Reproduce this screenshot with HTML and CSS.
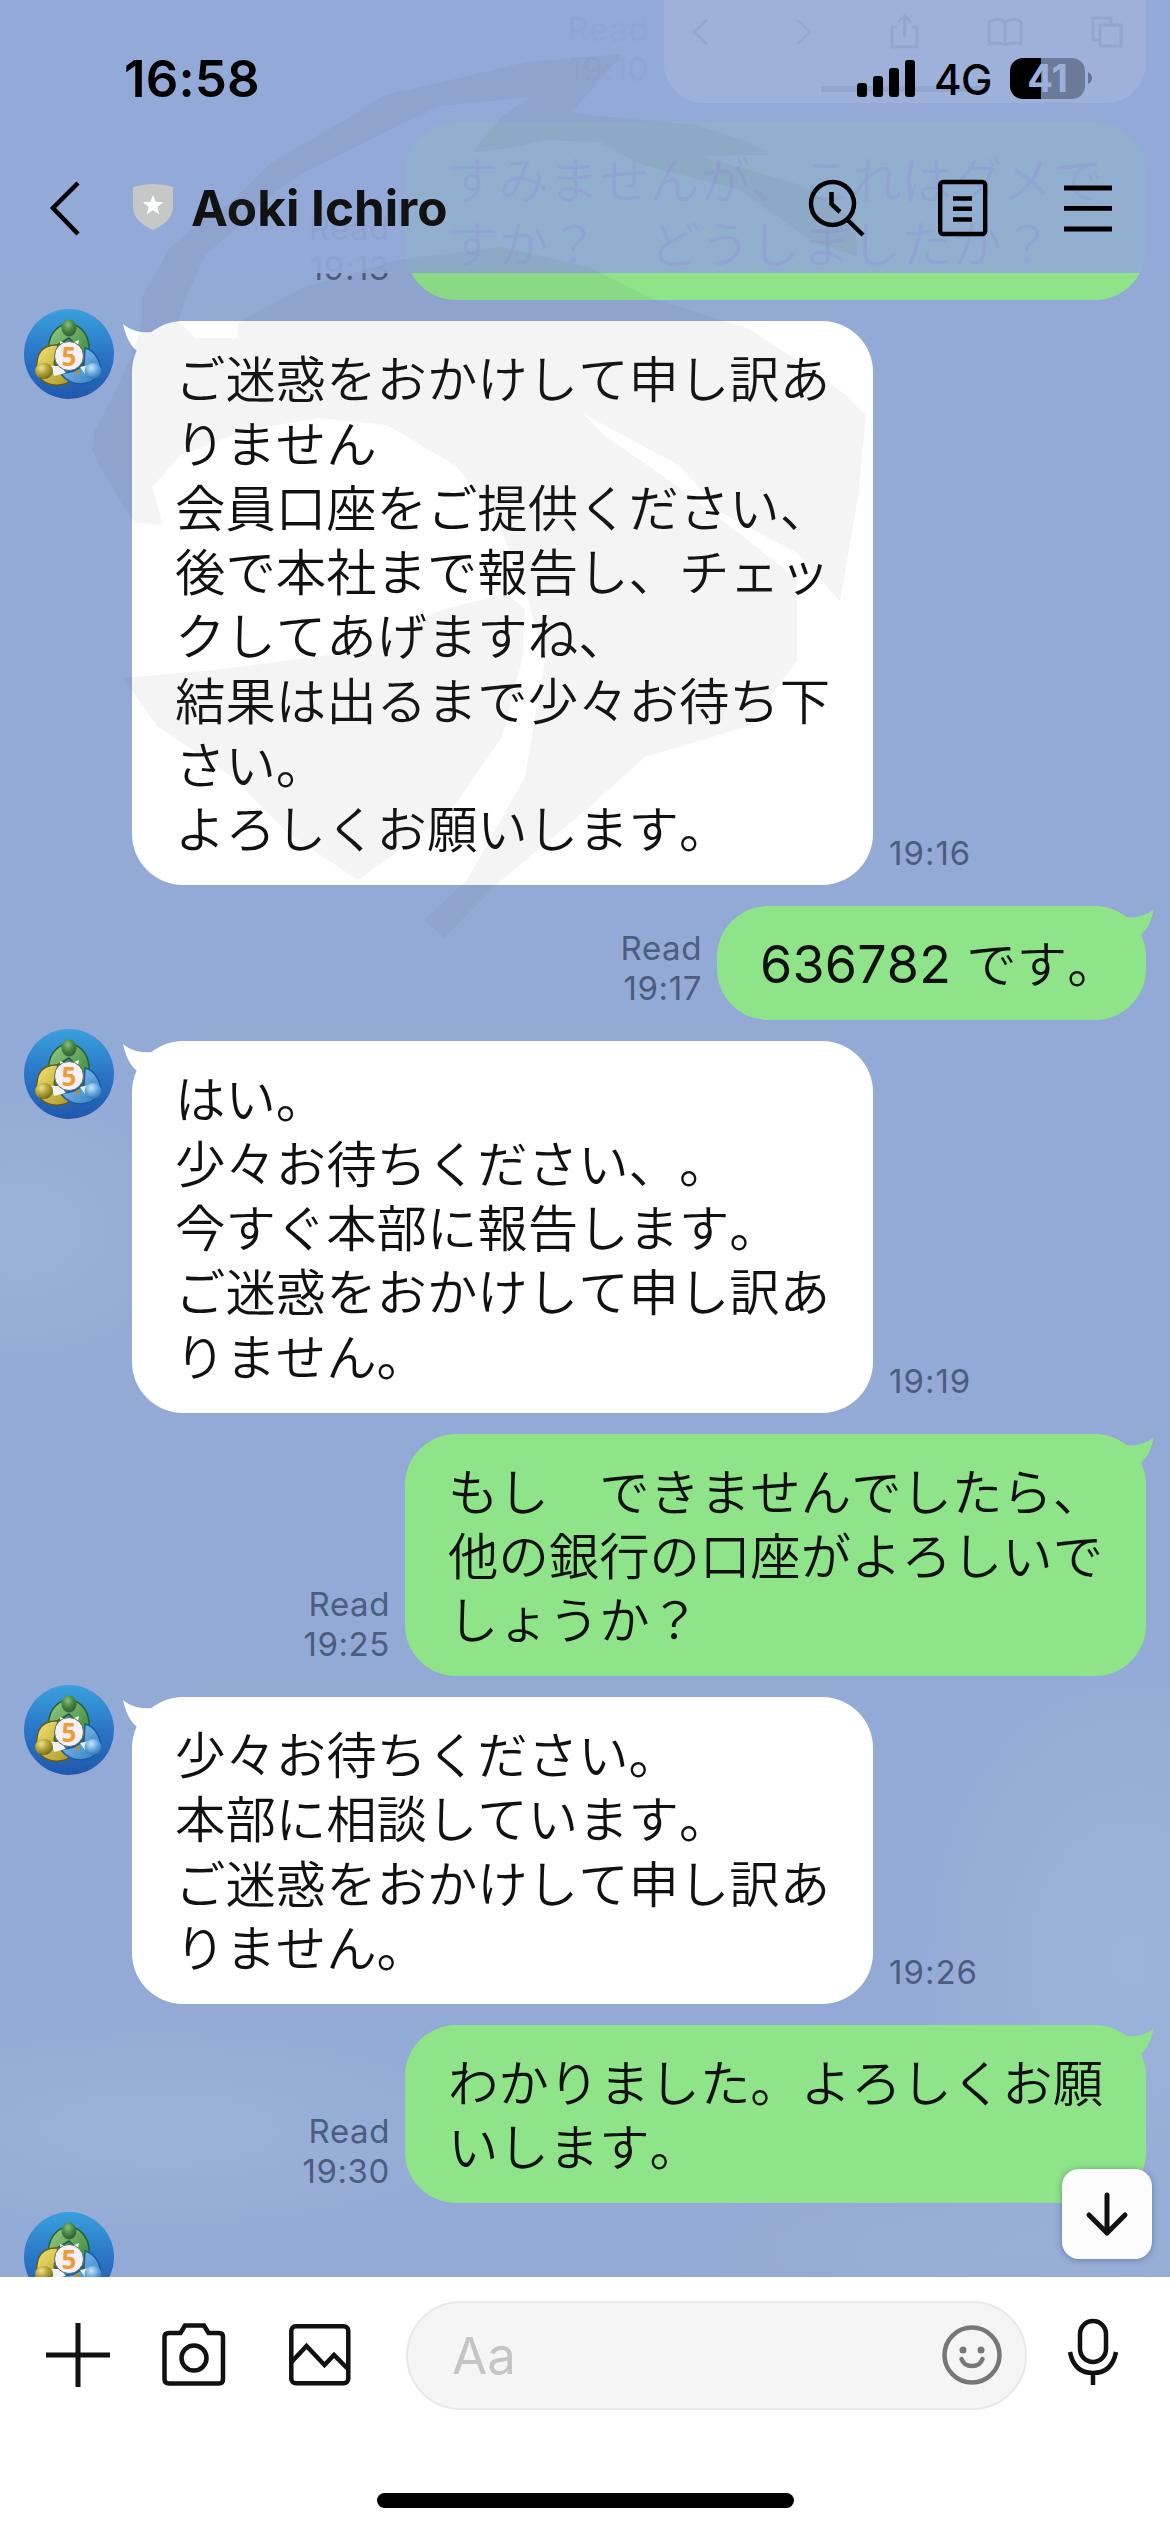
FILE: index.html
```html
<!DOCTYPE html>
<html lang="ja">
<head>
<meta charset="utf-8">
<title>Aoki Ichiro</title>
<link rel="stylesheet" href="styles.css">
</head>
<body>
<svg class="defs" aria-hidden="true">
  <defs>
    <linearGradient id="disc" x1="0" y1="0" x2="0" y2="1"><stop offset="0" stop-color="#3aa0dd"/><stop offset=".5" stop-color="#2a76c6"/><stop offset="1" stop-color="#2058ae"/></linearGradient>
    <linearGradient id="green" x1="0" y1="0" x2="1" y2="1"><stop offset="0" stop-color="#9acb84"/><stop offset="1" stop-color="#2d8136"/></linearGradient>
    <linearGradient id="gold" x1="0" y1="0" x2="1" y2="1"><stop offset="0" stop-color="#efe374"/><stop offset="1" stop-color="#ab931d"/></linearGradient>
    <linearGradient id="sky" x1="0" y1="0" x2="1" y2="1"><stop offset="0" stop-color="#91cbef"/><stop offset="1" stop-color="#2f7dc6"/></linearGradient>
    <radialGradient id="greenHead" cx=".42" cy=".3" r=".7"><stop offset="0" stop-color="#8fc07e"/><stop offset=".5" stop-color="#4b8a45"/><stop offset="1" stop-color="#286030"/></radialGradient>
    <radialGradient id="goldHead" cx=".35" cy=".3" r=".75"><stop offset="0" stop-color="#eee28a"/><stop offset=".5" stop-color="#b3a137"/><stop offset="1" stop-color="#74671c"/></radialGradient>
    <radialGradient id="skyHead" cx=".4" cy=".3" r=".75"><stop offset="0" stop-color="#cbe7f8"/><stop offset=".5" stop-color="#68aadd"/><stop offset="1" stop-color="#2a6db0"/></radialGradient>
    <symbol id="avatar" viewBox="0 0 90 90">
      <circle cx="45" cy="45" r="45" fill="url(#disc)"/>
      <path d="M25 46C22 27 33 15 45 15S69 29 64 48C62 54 55 58 50 58L53 37 45 29 33 36Z" fill="url(#green)" stroke="#24602c" stroke-width="1.5"/>
      <path d="M13 62C11 44 19 35 34 36L30 55 40 65 50 69C42 78 25 79 16 69Z" fill="url(#gold)" stroke="#655a1c" stroke-width="1.5"/>
      <path d="M61 39C73 42 79 56 75 66 66 78 47 78 37 65L50 62 60 56Z" fill="url(#sky)" stroke="#1d5a9c" stroke-width="1.5"/>
      <path d="M36 32L45 35 55 31 53 42 37 42ZM27 57l10 0 5 7-12 3ZM56 58l10-2 1 8-6 1Z" fill="#eef3ef"/>
      <path d="M50 64L57 60 54 66Z" fill="#b3902a"/>
      <ellipse cx="45" cy="19" rx="7.500" ry="8.500" fill="url(#greenHead)"/>
      <ellipse cx="20" cy="62" rx="9" ry="8" fill="url(#goldHead)"/>
      <ellipse cx="69" cy="62" rx="8.500" ry="8" fill="url(#skyHead)"/>
      <circle cx="45" cy="47" r="14.500" fill="#f3f1f3" stroke="#666c55" stroke-width="1"/>
      <text x="45" y="56.500" text-anchor="middle" font-family="Open Sans, sans-serif" font-size="26" font-weight="700" fill="#ee9a3b">5</text>
    </symbol>
    <symbol id="tail" viewBox="0 0 30 32"><path d="M0 3C8 10 18 12 28 11L30 32 14 30C6 23 3 15 0 3Z"/></symbol>
  </defs>
</svg>
<div class="phone">
  <main class="chat">
    <div class="row mine first">
      <div class="meta">Read<br>19:10</div>
      <div class="card">
        <svg width="482" height="104" fill="none" stroke="#777d88" stroke-width="3">
          <path d="M43 21L30 33 43 45"/><path d="M133 21L146 33 133 45" stroke="#aab"/>
          <path d="M233 28H228V48H253V28H248M240.500 38V17M234 23L240.500 17 247 23"/>
          <path d="M341 46V23Q333 17 325 23V45Q333 42 341 46Q349 42 357 45V23Q349 17 341 23"/>
          <path d="M436 41H429V19H447V26M436 26H457V47H436Z"/>
          <path d="M157 90H320" stroke-width="6"/>
        </svg>
      </div>
    </div>
    <div class="row mine under">
      <div class="meta">Read<br>19:13</div>
      <div class="bubble wide">すみませんが、これはダメで<br>すか？　どうしましたか？</div>
    </div>
    <div class="row theirs">
      <svg class="avatar"><use href="#avatar"/></svg>
      <div class="bubble wide"><svg class="tail"><use href="#tail"/></svg>ご迷惑をおかけして申し訳あ<br>りません<br>会員口座をご提供ください、<br>後で本社まで報告し、チェッ<br>クしてあげますね、<br>結果は出るまで少々お待ち下<br>さい。<br>よろしくお願いします。</div>
      <div class="meta">19:16</div>
    </div>
    <div class="row mine">
      <div class="meta">Read<br>19:17</div>
      <div class="bubble short"><svg class="tail"><use href="#tail"/></svg><span class="digits">636782</span> です。</div>
    </div>
    <div class="row theirs">
      <svg class="avatar"><use href="#avatar"/></svg>
      <div class="bubble wide"><svg class="tail"><use href="#tail"/></svg>はい。<br>少々お待ちください、。<br>今すぐ本部に報告します。<br>ご迷惑をおかけして申し訳あ<br>りません。</div>
      <div class="meta">19:19</div>
    </div>
    <div class="row mine">
      <div class="meta">Read<br>19:25</div>
      <div class="bubble wide"><svg class="tail"><use href="#tail"/></svg>もし　できませんでしたら、<br>他の銀行の口座がよろしいで<br>しょうか？</div>
    </div>
    <div class="row theirs">
      <svg class="avatar"><use href="#avatar"/></svg>
      <div class="bubble wide"><svg class="tail"><use href="#tail"/></svg>少々お待ちください。<br>本部に相談しています。<br>ご迷惑をおかけして申し訳あ<br>りません。</div>
      <div class="meta">19:26</div>
    </div>
    <div class="row mine">
      <div class="meta">Read<br>19:30</div>
      <div class="bubble wide"><svg class="tail"><use href="#tail"/></svg>わかりました。よろしくお願<br>いします。</div>
    </div>
    <div class="row theirs">
      <svg class="avatar"><use href="#avatar"/></svg>
    </div>
    <button class="jump" aria-label="Latest"><svg width="90" height="90" fill="none" stroke="#111" stroke-width="5" stroke-linecap="round" stroke-linejoin="round"><path d="M45 26V64M27 46L45 64 63 46"/></svg></button>
  </main>

  <header class="top">
    <div class="status">
      <span class="clock">16:58</span>
      <svg class="signal" width="58" height="38"><rect x="0" y="23" width="10" height="14" rx="3"/><rect x="16" y="16" width="10" height="21" rx="3"/><rect x="32" y="8" width="10" height="29" rx="3"/><rect x="48" y="0" width="10" height="37" rx="3"/></svg>
      <span class="network">4G</span>
      <div class="battery"><span>41</span></div>
      <svg class="nub" width="4" height="12"><path d="M0 0Q4 2 4 6T0 12Z" fill="#65779b"/></svg>
    </div>
    <div class="nav">
      <svg class="back" width="32" height="56" fill="none" stroke="#000" stroke-width="4.500"><path d="M29 3L4 28 29 54"/></svg>
      <svg class="shield" width="42" height="48"><path d="M1 4Q21-2 41 4V24Q41 38 21 47Q1 38 1 24Z" fill="#c6c7c7"/><path d="M21 12L23.700 18.800 31 19.300 25.400 24 27.200 31.200 21 27.300 14.800 31.200 16.600 24 11 19.300 18.300 18.800Z" fill="#fff"/></svg>
      <h1>Aoki Ichiro</h1>
      <svg class="find" width="60" height="60" fill="none" stroke="#000" stroke-width="4.500"><circle cx="25.500" cy="25.500" r="21.500"/><path d="M24.500 14V26L33 34M39.500 41L56 57"/></svg>
      <svg class="note" width="50" height="58" fill="none" stroke="#000"><rect x="2.200" y="3" width="45" height="52" rx="3" stroke-width="4.400"/><path d="M15 19.500H34M15 29.800H34M15 40.500H34" stroke-width="4.500"/></svg>
      <svg class="menu" width="50" height="50" stroke="#000" stroke-width="4.800"><path d="M1 5H49M1 25.300H49M1 46H49"/></svg>
    </div>
  </header>

  <svg class="mark" width="1170" height="1000" aria-hidden="true">
    <path d="M142 322V297L155 275 168 250 200 222 230 203 268 165 310 140 345 120 385 95 460 78 525 62 622 54 600 80 572 112 600 116 696 125 742 140 771 155 700 156 800 185 855 220 857 257 810 240 740 190 643 165 600 142 545 140 510 148 473 152 501 117 530 97 440 106 400 125 350 150 305 172 270 195 235 230 205 255 185 300 178 322 196 338 238 338 238 323 301 288 398 260 502 247 588 267 651 298 749 329 795 359 846 395 866 415 858 497 840 601 797 553 720 512 680 466 582 413 605 436 663 476 731 527 797 579 797 660 749 726 645 757 588 808 496 885 444 938 424 920 467 880 525 777 545 660 525 589 496 517 456 466 387 425 318 418 243 431 180 456 152 487 163 525 134 522 106 477 92 450 95 430 110 403 133 353Z"/>
    <path d="M123 678L215 670 330 655 375 640 444 609 507 594 525 609 522 660 502 737 456 803 421 834 358 880 289 834 232 777 157 726Z"/>
  </svg>

  <footer class="composer">
    <div class="tools">
      <svg class="plus" width="64" height="66" stroke="#111" stroke-width="5"><path d="M0 33H64M32 1V65"/></svg>
      <svg class="camera" width="64" height="64" fill="none" stroke="#111" stroke-width="4.500"><path d="M7 10H18.500L23 2.500H42L46.500 10H57Q61 10 61 14V56Q61 60.500 57 60.500H7Q2.500 60.500 2.500 56V14Q2.500 10 7 10Z"/><circle cx="32" cy="35" r="12.500"/></svg>
      <svg class="photo" width="62" height="62" fill="none" stroke="#111" stroke-width="4.500"><rect x="2.300" y="2.300" width="57" height="57" rx="4.500"/><path d="M2.500 38L17.500 22 35.500 41 45 31 59 45"/></svg>
      <div class="field"><span>Aa</span>
        <svg width="62" height="62" fill="none" stroke="#777" stroke-width="4.500"><circle cx="31" cy="31" r="27.500"/><circle cx="22" cy="26" r="3.500" fill="#777" stroke="none"/><circle cx="40" cy="26" r="3.500" fill="#777" stroke="none"/><path d="M20.500 35Q23 42 31 42T41.500 35" stroke-linecap="round"/></svg>
      </div>
      <svg class="mic" width="52" height="68" fill="none" stroke="#111" stroke-width="4.500"><rect x="13" y="3" width="26" height="41" rx="13"/><path d="M3 34Q7 55 26 55T49 34M26 55V67"/></svg>
    </div>
    <div class="home"></div>
  </footer>
</div>
</body>
</html>
```
FILE: styles.css
```css
* { box-sizing: border-box; }
body { margin: 0; font-family: Inter, "Noto Sans CJK JP", sans-serif; color: #111; }
svg { display: block; flex: none; }
.defs { position: absolute; width: 0; height: 0; }
.phone { position: relative; width: 1170px; height: 2532px; overflow: hidden; display: flex; flex-direction: column; background: #fff; }

.chat {
  position: relative; height: 2277px; overflow: hidden; flex: none;
  display: flex; flex-direction: column; gap: 21px;
  background:
    radial-gradient(ellipse 220px 170px at 20px 1230px, rgba(160,184,220,.6), rgba(160,184,220,0)),
    radial-gradient(ellipse 260px 360px at 1130px 1960px, rgba(160,184,220,.7), rgba(160,184,220,0)),
    radial-gradient(ellipse 420px 130px at 160px 2130px, rgba(160,184,220,.6), rgba(160,184,220,0)),
    radial-gradient(ellipse 420px 110px at 1000px 2250px, rgba(155,178,215,.6), rgba(155,178,215,0)),
    #93a9d6;
}
.row { display: flex; align-items: flex-end; flex: none; }
.mine { justify-content: flex-end; padding-right: 24px; }
.theirs { padding-left: 24px; }
.first { height: 103px; margin-bottom: -2px; }
.card { width: 482px; height: 104px; background: #fff; border-radius: 0 0 40px 40px; }
.bubble {
  position: relative; padding: 24px 0 25.700px 43px; border-radius: 51px;
  font-family: "Noto Sans CJK JP DemiLight", "Noto Sans CJK JP", sans-serif; font-weight: 350; font-size: 50.400px; line-height: 64.300px;
  white-space: nowrap; font-kerning: none; text-spacing-trim: space-all;
}
.wide { width: 741px; }
.short { width: 429px; }
.digits { font-family: Inter, sans-serif; font-weight: 400; font-size: 52px; letter-spacing: .2px; line-height: 1; margin-right: 4px; }
.theirs .bubble { background: #fff; }
.mine .bubble { background: #8fe489; }
.first .meta { color: #6d7ca0; padding-bottom: 14px; }
.under .bubble { color: #6d759c; }
.tail { position: absolute; width: 30px; height: 32px; top: 0; }
.theirs .tail { left: -9px; fill: #fff; }
.mine .tail { right: -8px; fill: #8fe489; transform: scaleX(-1); }
.avatar { width: 90px; height: 90px; margin-right: 18px; align-self: flex-start; margin-top: -12px; }
.meta { font-size: 33px; line-height: 40px; color: #4c5d7e; text-align: right; padding-bottom: 12px; letter-spacing: .6px; }
.theirs .meta { padding-left: 16px; letter-spacing: 1px; }
.mine .meta { padding-right: 15px; }
.jump { position: absolute; left: 1062px; top: 2169px; width: 90px; height: 90px; padding: 0; border: 0; border-radius: 17px; background: #fcfcfc; box-shadow: 0 1px 7px rgba(30,50,90,.4); }

.top { position: absolute; inset: 0 0 auto 0; height: 273px; background: rgba(147,169,214,.91); color: #000; }
.status { height: 156px; display: flex; align-items: center; }
.clock { width: 732px; padding-left: 124px; font-size: 51px; font-weight: 600; letter-spacing: .1px; }
.signal { margin-left: 125px; margin-top: 1px; }
.network { width: 76px; margin-left: 19px; font-size: 42px; font-weight: 500; letter-spacing: -.5px; margin-top: 2px; }
.battery { width: 75px; height: 41px; border-radius: 13px; margin-left: 0; background: linear-gradient(90deg, #000 31px, #6a7a98 31px); text-align: center; color: #9bb0dc; font-size: 38px; line-height: 41px; font-weight: 700; flex: none; }
.nub { margin-left: 3px; }
.nav { height: 104px; display: flex; align-items: center; }
.back { margin-left: 49px; }
.shield { margin-left: 51px; margin-top: -3px; }
h1 { margin: 0 0 0 17px; width: 613px; font-size: 49.500px; line-height: 60px; font-weight: 700; letter-spacing: 0; color: #111; }
.find { margin-left: 3px; margin-top: -1px; }
.note { margin-left: 71px; }
.menu { margin-left: 75px; }
.mark { position: absolute; left: 0; top: 0; fill: #505a50; opacity: .062; pointer-events: none; }

.composer { flex: 1; background: #fff; }
.tools { height: 156px; display: flex; align-items: center; padding-left: 46px; }
.camera { margin-left: 52px; }
.photo { margin-left: 63px; }
.field { width: 621px; height: 109px; margin-left: 55px; border: 2px solid #e9e9e9; border-radius: 55px; background: #f5f5f5; display: flex; align-items: center; justify-content: space-between; padding: 0 22px 0 44px; font-size: 51px; color: #c5c5c5; }
.mic { margin-left: 40px; margin-top: -6px; }
.home { width: 417px; height: 15px; border-radius: 8px; background: #000; margin: 60px 0 0 377px; }
```
